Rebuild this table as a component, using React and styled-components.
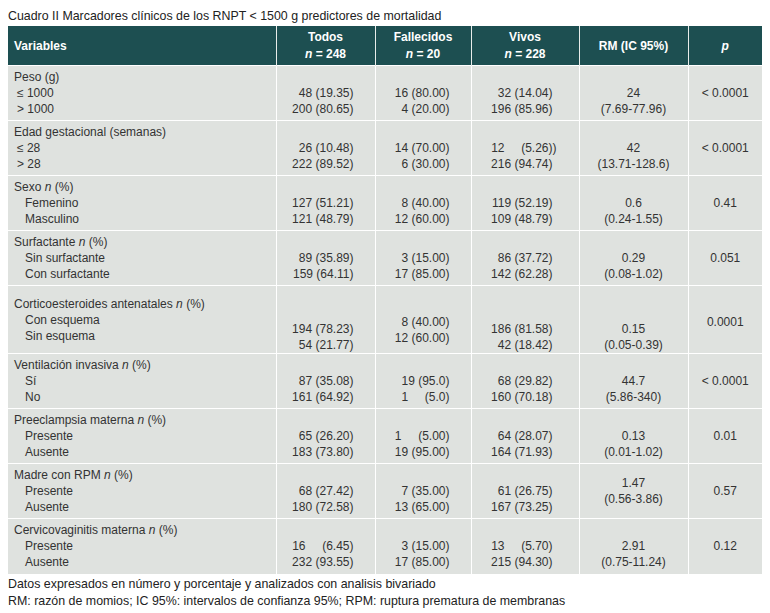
import React from 'react';
import styled, { createGlobalStyle } from 'styled-components';

const Global = createGlobalStyle`
  body {
    margin: 8px;
    background: #fff;
  }
`;

const Page = styled.div`
  font-family: "Liberation Sans", Arial, sans-serif;
  font-size: 12px;
  color: #333;
`;

const Title = styled.div`
  font-size: 12.4px;
  line-height: 16px;
  margin-bottom: 2px;
  color: #222;
`;

const Table = styled.table`
  width: 754px;
  border-collapse: collapse;
  table-layout: fixed;
  background: #dfe2df;
`;

const Th = styled.th`
  background: #1d4f51;
  color: #fff;
  font-weight: bold;
  height: 38px;
  padding: 1px 6px 0;
  line-height: 17px;
  text-align: ${p => p.$align || 'center'};
  border-left: 1px solid #e8ecea;
  &:first-child {
    border-left: none;
  }
`;

const Row = styled.tr`
  height: ${p => p.$h}px;
`;

const Td = styled.td`
  vertical-align: top;
  padding: ${p => p.$top}px ${p => p.$right || 0}px 0 ${p => p.$left || 0}px;
  line-height: 16px;
  text-align: ${p => p.$align || 'right'};
  white-space: pre;
  border-top: 1px solid #fff;
  border-left: 1px solid #fff;
  &:first-child {
    border-left: none;
  }
`;

const Line = styled.div`
  padding-left: ${p => p.$indent || 0}px;
`;

const Over = styled.span`
  margin-right: -4px;
`;

const Notes = styled.div`
  font-size: 12.4px;
  line-height: 17px;
  margin-top: 2px;
  color: #222;
`;

const groups = [
  {
    label: 'Peso (g)', indent: 3,
    subs: ['≤ 1000', '> 1000'],
    todos: ['48 (19.35)', '200 (80.65)'],
    fall: ['16 (80.00)', '4 (20.00)'],
    vivos: ['32 (14.04)', '196 (85.96)'],
    rm: ['24', '(7.69-77.96)'], p: '< 0.0001',
  },
  {
    label: 'Edad gestacional (semanas)', indent: 3,
    subs: ['≤ 28', '> 28'],
    todos: ['26 (10.48)', '222 (89.52)'],
    fall: ['14 (70.00)', '6 (30.00)'],
    vivos: [<>12     (5.26)<Over>)</Over></>, '216 (94.74)'],
    rm: ['42', '(13.71-128.6)'], p: '< 0.0001',
  },
  {
    label: 'Sexo', n: true,
    subs: ['Femenino', 'Masculino'],
    todos: ['127 (51.21)', '121 (48.79)'],
    fall: ['8 (40.00)', '12 (60.00)'],
    vivos: ['119 (52.19)', '109 (48.79)'],
    rm: ['0.6', '(0.24-1.55)'], p: '0.41',
  },
  {
    label: 'Surfactante', n: true,
    subs: ['Sin surfactante', 'Con surfactante'],
    todos: ['89 (35.89)', '159 (64.11)'],
    fall: ['3 (15.00)', '17 (85.00)'],
    vivos: ['86 (37.72)', '142 (62.28)'],
    rm: ['0.29', '(0.08-1.02)'], p: '0.051',
  },
  {
    label: 'Corticoesteroides antenatales', n: true, tall: true,
    subs: ['Con esquema', 'Sin esquema'],
    todos: ['194 (78.23)', '54 (21.77)'],
    fall: ['8 (40.00)', '12 (60.00)'],
    vivos: ['186 (81.58)', '42 (18.42)'],
    rm: ['0.15', '(0.05-0.39)'], p: '0.0001',
  },
  {
    label: 'Ventilación invasiva', n: true,
    subs: ['Sí', 'No'],
    todos: ['87 (35.08)', '161 (64.92)'],
    fall: ['19 (95.0)', '1     (5.0)'],
    vivos: ['68 (29.82)', '160 (70.18)'],
    rm: ['44.7', '(5.86-340)'], p: '< 0.0001',
  },
  {
    label: 'Preeclampsia materna', n: true,
    subs: ['Presente', 'Ausente'],
    todos: ['65 (26.20)', '183 (73.80)'],
    fall: ['1     (5.00)', '19 (95.00)'],
    vivos: ['64 (28.07)', '164 (71.93)'],
    rm: ['0.13', '(0.01-1.02)'], p: '0.01',
  },
  {
    label: 'Madre con RPM', n: true, rmTop: 11,
    subs: ['Presente', 'Ausente'],
    todos: ['68 (27.42)', '180 (72.58)'],
    fall: ['7 (35.00)', '13 (65.00)'],
    vivos: ['61 (26.75)', '167 (73.25)'],
    rm: ['1.47', '(0.56-3.86)'], p: '0.57',
  },
  {
    label: 'Cervicovaginitis materna', n: true,
    subs: ['Presente', 'Ausente'],
    todos: ['16     (6.45)', '232 (93.55)'],
    fall: ['3 (15.00)', '17 (85.00)'],
    vivos: ['13     (5.70)', '215 (94.30)'],
    rm: ['2.91', '(0.75-11.24)'], p: '0.12',
  },
];

const Lines = ({ items }) => items.map((t, i) => <Line key={i}>{t}</Line>);

const Group = ({ g }) => {
  const tall = g.tall;
  const valTop = tall ? 35 : 19;
  const fallTop = tall ? 28 : 19;
  const subIndent = g.indent !== undefined ? g.indent : 11;
  return (
    <Row $h={tall ? 68 : 55}>
      <Td $top={tall ? 10 : 3} $left={6} $align="left">
        <Line>
          {g.label}
          {g.n && <> <i>n</i> (%)</>}
        </Line>
        {g.subs.map((s, i) => (
          <Line key={i} $indent={subIndent}>{s}</Line>
        ))}
      </Td>
      <Td $top={valTop} $right={21}><Lines items={g.todos} /></Td>
      <Td $top={fallTop} $right={21}><Lines items={g.fall} /></Td>
      <Td $top={valTop} $right={26}><Lines items={g.vivos} /></Td>
      <Td $top={g.rmTop || valTop} $align="center"><Lines items={g.rm} /></Td>
      <Td $top={tall ? 28 : 19} $align="center">{g.p}</Td>
    </Row>
  );
};

export default function App() {
  return (
    <Page>
      <Global />
      <Title>Cuadro II Marcadores clínicos de los RNPT &lt; 1500 g predictores de mortalidad</Title>
      <Table>
        <colgroup>
          <col style={{ width: 268 }} />
          <col style={{ width: 99 }} />
          <col style={{ width: 96 }} />
          <col style={{ width: 108 }} />
          <col style={{ width: 109 }} />
          <col style={{ width: 74 }} />
        </colgroup>
        <thead>
          <tr>
            <Th $align="left">Variables</Th>
            <Th>Todos<br /><i>n</i> = 248</Th>
            <Th>Fallecidos<br /><i>n</i> = 20</Th>
            <Th>Vivos<br /><i>n</i> = 228</Th>
            <Th>RM (IC 95%)</Th>
            <Th><i>p</i></Th>
          </tr>
        </thead>
        <tbody>
          {groups.map((g, i) => <Group key={i} g={g} />)}
        </tbody>
      </Table>
      <Notes>
        <div>Datos expresados en número y porcentaje y analizados con analisis bivariado</div>
        <div>RM: razón de momios; IC 95%: intervalos de confianza 95%; RPM: ruptura prematura de membranas</div>
      </Notes>
    </Page>
  );
}
